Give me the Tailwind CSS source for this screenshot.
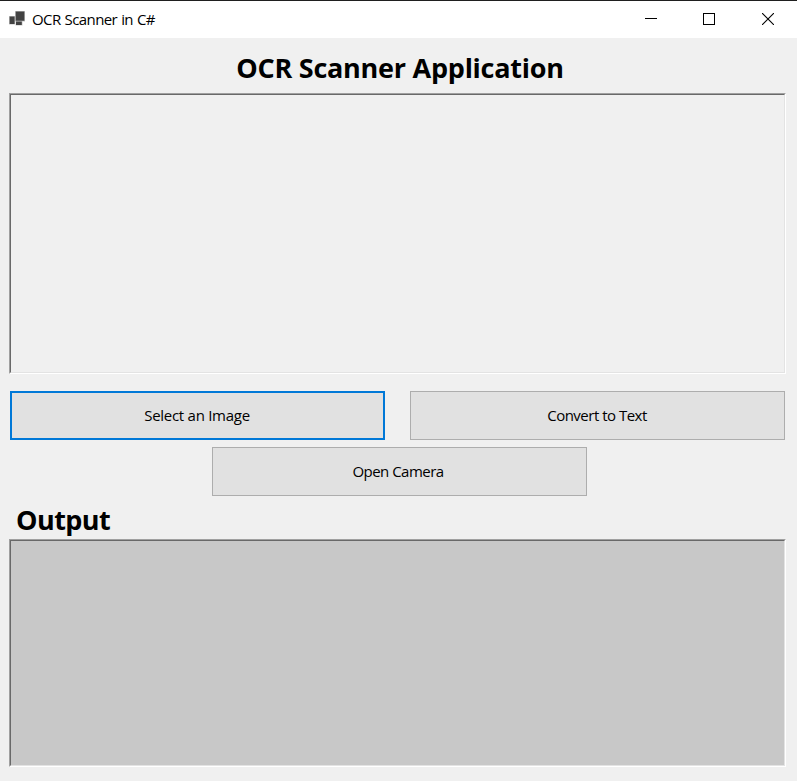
<!DOCTYPE html>
<html lang="en">
<head>
<meta charset="utf-8">
<title>OCR Scanner in C#</title>
<script src="https://cdn.jsdelivr.net/npm/@tailwindcss/browser@4"></script>
</head>
<body class="w-[797px] h-[781px] overflow-hidden bg-[#f0f0f0] font-['Open_Sans','Noto_Sans',sans-serif] text-black">
<header class="flex h-[38px] items-center border-t border-[#1f1f1f] bg-white pb-px pl-[9px]">
  <svg class="mr-[7px] block h-4 w-4 shrink-0" viewBox="0 0 16 16"><path d="M6 0h10v10.500h-10zM0 5h6v8.500h-6zM6.500 9h7v5.500h-7z" fill="#c8c8c8"/><path d="M6.700 .6h8.700v9.200h-8.700zM.6 5.600h5v7.300h-5zM7 10.600h5.800v3.300h-5.800z" fill="#424242"/></svg>
  <span class="text-[15px] leading-[20px] tracking-[-0.6px] [word-spacing:0.75px] whitespace-nowrap">OCR Scanner in C#</span>
  <div class="ml-auto flex h-full">
    <div class="flex w-[58px] items-center justify-center"><svg class="block h-3 w-3" viewBox="0 0 12 12" shape-rendering="crispEdges"><path d="M0 5.500h12" stroke="#000"/></svg></div>
    <div class="flex w-[58px] items-center justify-center"><svg class="block h-3 w-3" viewBox="0 0 12 12" fill="none" shape-rendering="crispEdges"><path d="M.5.5h11v11H.5z" stroke="#000"/></svg></div>
    <div class="flex w-[59px] items-center justify-center"><svg class="block h-3 w-3" viewBox="0 0 12 12"><path d="M0 0l12 12M12 0L0 12" stroke="#000" stroke-width="1.100"/></svg></div>
  </div>
</header>
<main class="flex flex-col pl-[9px]">
  <h1 class="flex h-[55px] w-[782px] items-center justify-center pt-[5px] text-[27px] leading-[38px] font-bold tracking-[-0.25px] whitespace-nowrap">OCR Scanner Application</h1>
  <div class="h-[281px] w-[777px] border border-t-[#a0a0a0] border-r-white border-b-white border-l-[#a0a0a0]">
    <div class="h-full border border-t-[#696969] border-r-[#e3e3e3] border-b-[#e3e3e3] border-l-[#696969]"></div>
  </div>
  <div class="mt-[17px] flex gap-[25px] pl-px text-[15px]">
    <button class="h-[49px] w-[375px] border-2 border-[#0078d7] bg-[#e1e1e1] pr-px tracking-[-0.27px]"><span>Select an Image</span></button>
    <button class="h-[49px] w-[375px] border border-[#adadad] bg-[#e1e1e1] pr-px tracking-[-0.5px]"><span>Convert to Text</span></button>
  </div>
  <button class="mt-[7px] ml-[203px] h-[49px] w-[375px] border border-[#adadad] bg-[#e1e1e1] pr-[3px] text-[15px] tracking-[-0.52px]"><span>Open Camera</span></button>
  <h2 class="flex h-[43px] items-center pt-[5px] pl-[7px] text-[27px] leading-[38px] font-bold tracking-[-0.55px] whitespace-nowrap">Output</h2>
  <div class="h-[228px] w-[777px] border border-t-[#a0a0a0] border-r-white border-b-white border-l-[#a0a0a0] bg-[#c8c8c8]">
    <div class="h-full border border-t-[#696969] border-r-[#e3e3e3] border-b-[#e3e3e3] border-l-[#696969]"></div>
  </div>
</main>
</body>
</html>
